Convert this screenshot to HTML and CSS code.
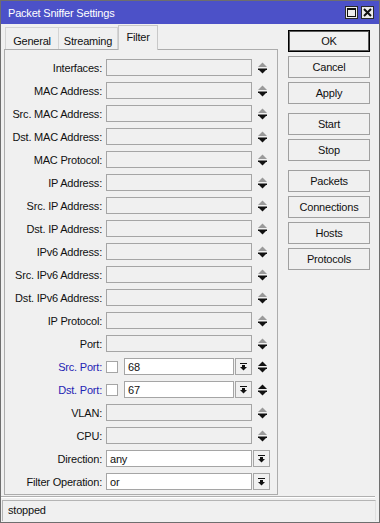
FILE: index.html
```html
<!DOCTYPE html>
<html>
<head>
<meta charset="utf-8">
<link rel="stylesheet" href="styles.css">
</head>
<body>
<svg class="defs" width="0" height="0">
  <defs>
    <symbol id="ud-dis" viewBox="0 0 9 12">
      <polygon points="0,5 4.5,0.5 9,5" fill="#9a9a9a"/>
      <rect x="0" y="6.5" width="9" height="1.5" fill="#111"/>
      <polygon points="0.5,7.5 8.5,7.5 4.5,11.5" fill="#111"/>
    </symbol>
    <symbol id="ud-en" viewBox="0 0 9 12">
      <polygon points="0,5 4.5,0.5 9,5" fill="#111"/>
      <rect x="0" y="6.5" width="9" height="1.5" fill="#111"/>
      <polygon points="0.5,7.5 8.5,7.5 4.5,11.5" fill="#111"/>
    </symbol>
    <symbol id="dd" viewBox="0 0 7 8">
      <rect x="0" y="0" width="7" height="1" fill="#111"/>
      <rect x="2" y="2" width="3" height="2" fill="#111"/>
      <polygon points="0,4 7,4 3.5,7.5" fill="#111"/>
    </symbol>
  </defs>
</svg>
<div class="window">
  <div class="titlebar">
    <span class="title">Packet Sniffer Settings</span>
    <div class="tbtns">
      <span class="tbtn"><svg width="11" height="11" viewBox="0 0 11 11"><rect x="1.5" y="1.5" width="8" height="8" fill="none" stroke="#111" stroke-width="1"/><rect x="1" y="1" width="9" height="2" fill="#111"/></svg></span>
      <span class="tbtn"><svg width="11" height="11" viewBox="0 0 11 11"><path d="M2 2 L9 9 M9 2 L2 9" stroke="#111" stroke-width="2"/></svg></span>
    </div>
  </div>
  <div class="main">
    <div class="left">
      <div class="tabs">
        <div class="tab t-general">General</div>
        <div class="tab t-stream">Streaming</div>
        <div class="tab t-filter active">Filter</div>
      </div>
      <div class="panel">
        <div class="row"><span class="lbl">Interfaces:</span><span class="field dis"></span><svg class="ud"><use href="#ud-dis"/></svg></div>
        <div class="row"><span class="lbl">MAC Address:</span><span class="field dis"></span><svg class="ud"><use href="#ud-dis"/></svg></div>
        <div class="row"><span class="lbl">Src. MAC Address:</span><span class="field dis"></span><svg class="ud"><use href="#ud-dis"/></svg></div>
        <div class="row"><span class="lbl">Dst. MAC Address:</span><span class="field dis"></span><svg class="ud"><use href="#ud-dis"/></svg></div>
        <div class="row"><span class="lbl">MAC Protocol:</span><span class="field dis"></span><svg class="ud"><use href="#ud-dis"/></svg></div>
        <div class="row"><span class="lbl">IP Address:</span><span class="field dis"></span><svg class="ud"><use href="#ud-dis"/></svg></div>
        <div class="row"><span class="lbl">Src. IP Address:</span><span class="field dis"></span><svg class="ud"><use href="#ud-dis"/></svg></div>
        <div class="row"><span class="lbl">Dst. IP Address:</span><span class="field dis"></span><svg class="ud"><use href="#ud-dis"/></svg></div>
        <div class="row"><span class="lbl">IPv6 Address:</span><span class="field dis"></span><svg class="ud"><use href="#ud-dis"/></svg></div>
        <div class="row"><span class="lbl">Src. IPv6 Address:</span><span class="field dis"></span><svg class="ud"><use href="#ud-dis"/></svg></div>
        <div class="row"><span class="lbl">Dst. IPv6 Address:</span><span class="field dis"></span><svg class="ud"><use href="#ud-dis"/></svg></div>
        <div class="row"><span class="lbl">IP Protocol:</span><span class="field dis"></span><svg class="ud"><use href="#ud-dis"/></svg></div>
        <div class="row"><span class="lbl">Port:</span><span class="field dis"></span><svg class="ud"><use href="#ud-dis"/></svg></div>
        <div class="row"><span class="lbl blue">Src. Port:</span><span class="chk"></span><span class="field port">68</span><span class="ddbtn"><svg class="ddi"><use href="#dd"/></svg></span><svg class="ud"><use href="#ud-en"/></svg></div>
        <div class="row"><span class="lbl blue">Dst. Port:</span><span class="chk"></span><span class="field port">67</span><span class="ddbtn"><svg class="ddi"><use href="#dd"/></svg></span><svg class="ud"><use href="#ud-en"/></svg></div>
        <div class="row"><span class="lbl">VLAN:</span><span class="field dis"></span><svg class="ud"><use href="#ud-dis"/></svg></div>
        <div class="row"><span class="lbl">CPU:</span><span class="field dis"></span><svg class="ud"><use href="#ud-dis"/></svg></div>
        <div class="row"><span class="lbl">Direction:</span><span class="field">any</span><span class="ddbtn"><svg class="ddi"><use href="#dd"/></svg></span></div>
        <div class="row"><span class="lbl">Filter Operation:</span><span class="field">or</span><span class="ddbtn"><svg class="ddi"><use href="#dd"/></svg></span></div>
      </div>
    </div>
    <div class="buttons">
      <div class="grp">
        <div class="btn default">OK</div>
        <div class="btn">Cancel</div>
        <div class="btn">Apply</div>
      </div>
      <div class="grp">
        <div class="btn">Start</div>
        <div class="btn">Stop</div>
      </div>
      <div class="grp">
        <div class="btn">Packets</div>
        <div class="btn">Connections</div>
        <div class="btn">Hosts</div>
        <div class="btn">Protocols</div>
      </div>
    </div>
  </div>
  <div class="sep"></div>
  <div class="status">stopped</div>
</div>
</body>
</html>
```

FILE: styles.css
```css
* { box-sizing: border-box; }
html, body { margin: 0; padding: 0; background: #f0f0f0; }
body {
  font-family: "Liberation Sans", Arial, sans-serif;
  font-size: 11px;
  letter-spacing: -0.2px;
  color: #111;
}
.defs { position: absolute; width: 0; height: 0; }

.window {
  width: 380px;
  height: 523px;
  border: 1px solid #6e6e6e;
  background: #f0f0f0;
  display: flex;
  flex-direction: column;
}

.titlebar {
  height: 23px;
  background: #4c51c8;
  display: flex;
  align-items: center;
  justify-content: space-between;
  padding: 0 5px 0 7px;
}
.title { color: #fff; font-size: 11px; line-height: 13px; padding-top: 1px; }
.tbtns { display: flex; gap: 3px; }
.tbtn {
  width: 13px;
  height: 13px;
  border: 1px solid #2b2b2b;
  background: #ececec;
  display: flex;
  align-items: center;
  justify-content: center;
}
.tbtn svg { display: block; }

.main {
  height: 471px;
  display: flex;
  padding-left: 3px;
}
.left { width: 274px; display: flex; flex-direction: column; }

.tabs {
  height: 24px;
  margin-top: 1px;
  padding-left: 1px;
  display: flex;
  align-items: flex-end;
  position: relative;
  z-index: 1;
}
.tab {
  height: 22px;
  border: 1px solid #d4d4d4;
  border-bottom: none;
  background: #f0f0f0;
  text-align: center;
  line-height: 13px;
  padding-top: 7px;
  color: #111;
}
.t-general { width: 54px; }
.t-stream { width: 59px; border-left: none; }
.t-filter { width: 40px; }
.tab.active {
  height: 25px;
  padding-top: 5px;
  margin-bottom: -1px;
  border-color: #c8c8c8;
  background: #f0f0f0;
}

.panel {
  height: 446px;
  border: 1px solid #acacac;
  padding: 9px 0 0 0;
  display: flex;
  flex-direction: column;
  gap: 6px;
}
.row {
  height: 17px;
  display: flex;
  align-items: center;
}
.lbl {
  width: 97px;
  margin-right: 4px;
  text-align: right;
  white-space: nowrap;
  line-height: 17px;
  padding-top: 1px;
}
.lbl.blue { color: #1f24b4; }
.field {
  width: 146px;
  height: 17px;
  border: 1px solid #a5a5a5;
  background: #fff;
  line-height: 15px;
  padding-left: 3px;
  padding-top: 1px;
  color: #111;
}
.field.dis { background: #f0f0f0; }
.field.port { width: 110px; }
.chk {
  width: 12px;
  height: 12px;
  border: 1px solid #a5a5a5;
  background: #fff;
  margin-right: 6px;
}
.ddbtn {
  width: 17px;
  height: 17px;
  margin-left: 1px;
  border: 1px solid #a5a5a5;
  background: #f0f0f0;
  display: flex;
  align-items: center;
  justify-content: center;
}
.ddi { width: 7px; height: 8px; display: block; }
.ud { width: 9px; height: 12px; margin-left: 6px; display: block; }

.buttons {
  margin-left: 10px;
  padding-top: 6px;
  width: 82px;
  display: flex;
  flex-direction: column;
  gap: 9px;
}
.grp { display: flex; flex-direction: column; gap: 4px; }
.btn {
  height: 22px;
  border: 1px solid #a0a0a0;
  background: #f0f0f0;
  text-align: center;
  line-height: 20px;
  color: #111;
}
.btn.default {
  border: 1px solid #000;
  box-shadow: inset 0 0 0 1px #5a5a5a;
}

.sep {
  margin-top: 1px;
  height: 2px;
  border-top: 1px solid #b0b0b0;
  border-bottom: 1px solid #ffffff;
  margin-right: 4px;
}
.status {
  margin-top: 2px;
  margin-left: 1px;
  margin-right: 3px;
  height: 21px;
  border: 1px solid #b4b4b4;
  border-right-color: #e0e0e0;
  border-bottom: none;
  padding-left: 5px;
  line-height: 19px;
}
```
